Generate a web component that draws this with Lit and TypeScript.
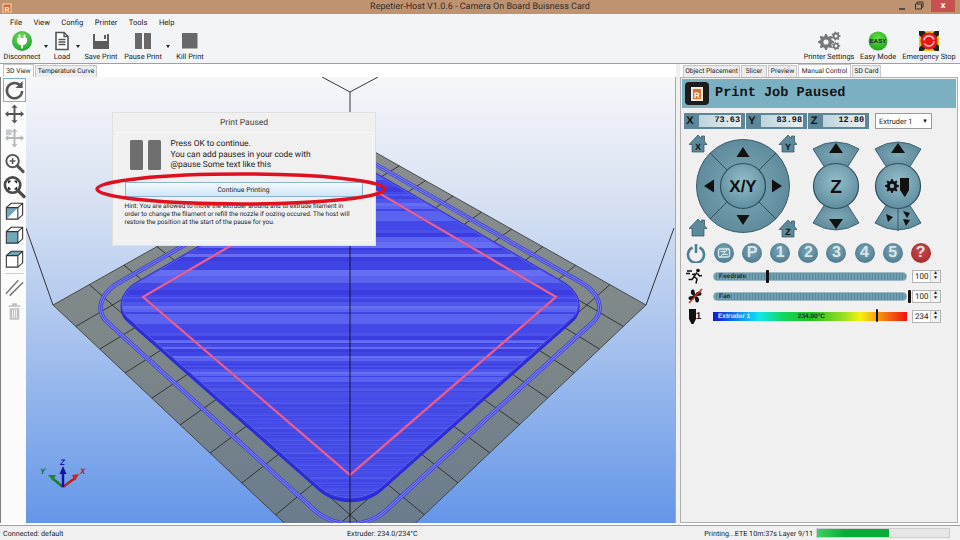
import { LitElement, html, css, svg } from 'lit';
import { customElement } from 'lit/decorators.js';

type Pt = [number, number];

// plate quad, projected: top, right, bottom, left
const Q: Pt[] = [[350, 138], [646, 305], [350, 585], [53, 305]];

function makeH(q: Pt[]) {
  const [[x0, y0], [x1, y1], [x2, y2], [x3, y3]] = q;
  const dx1 = x1 - x2, dx2 = x3 - x2, sx = x0 - x1 + x2 - x3;
  const dy1 = y1 - y2, dy2 = y3 - y2, sy = y0 - y1 + y2 - y3;
  const den = dx1 * dy2 - dx2 * dy1;
  const g = (sx * dy2 - dx2 * sy) / den;
  const h = (dx1 * sy - sx * dy1) / den;
  return { a: x1 - x0 + g * x1, b: x3 - x0 + h * x3, c: x0, d: y1 - y0 + g * y1, e: y3 - y0 + h * y3, f: y0, g, h };
}
const H = makeH(Q);
const fwd = (u: number, v: number): Pt => {
  const w = H.g * u + H.h * v + 1;
  return [(H.a * u + H.b * v + H.c) / w, (H.d * u + H.e * v + H.f) / w];
};
const inv = (x: number, y: number): Pt => {
  const { a, b, c, d, e, f, g, h } = H;
  const w = (d * h - e * g) * x + (b * g - a * h) * y + (a * e - b * d);
  return [((e - f * h) * x + (c * h - b) * y + (b * f - c * e)) / w, ((f * g - d) * x + (a - c * g) * y + (c * d - a * f)) / w];
};

// rounded print outline, given the unrounded left and right corners on screen
function rounded(left: Pt, right: Pt, r: number) {
  const [u0, v1] = inv(left[0], left[1]);
  const [u1, v0] = inv(right[0], right[1]);
  const corners: [number, number, number][] = [
    [u1 - r, v0 + r, -90], [u1 - r, v1 - r, 0], [u0 + r, v1 - r, 90], [u0 + r, v0 + r, 180],
  ];
  const pts: string[] = [];
  for (const [cu, cv, start] of corners) {
    for (let i = 0; i <= 14; i++) {
      const t = ((start + (i * 90) / 14) * Math.PI) / 180;
      const [x, y] = fwd(cu + r * Math.cos(t), cv + r * Math.sin(t));
      pts.push(`${x.toFixed(1)},${y.toFixed(1)}`);
    }
  }
  return 'M' + pts.join('L') + 'Z';
}

const bodyPath = rounded([108, 300], [592, 300], 0.085);
const skirtPath = rounded([85, 302], [615, 302], 0.095);

// horizontal fill stripes of the printed layer
function stripes() {
  const out: { y: number; h: number; c: string }[] = [];
  const upper = ['#4a50ea', '#3f44e4', '#5a62f0', '#4448e6', '#666ef4', '#3b3de0', '#4e55ec'];
  const lower = ['#484ee8', '#4046e4', '#5058ec', '#4449e6'];
  let y = 130, seed = 7;
  while (y < 515) {
    seed = (seed * 31 + 11) % 101;
    const h = y < 340 ? 2 + (seed % 6) : y < 400 ? 1 + (seed % 3) : 1;
    const cols = y < 380 ? upper : lower;
    out.push({ y, h, c: cols[seed % cols.length] });
    y += h;
  }
  return out;
}

function gearPath(cx: number, cy: number, ro: number, ri: number, hole: number, teeth = 8) {
  let d = '';
  const n = teeth * 4;
  for (let i = 0; i < n; i++) {
    const rad = i % 4 < 2 ? ro : ri;
    const t = ((i - 0.5) / n) * Math.PI * 2;
    d += `${i ? 'L' : 'M'}${(cx + rad * Math.cos(t)).toFixed(2)},${(cy + rad * Math.sin(t)).toFixed(2)}`;
  }
  d += `Z M${cx + hole},${cy} a${hole},${hole} 0 1,0 ${-2 * hole},0 a${hole},${hole} 0 1,0 ${2 * hole},0Z`;
  return d;
}

const MENU = ['File', 'View', 'Config', 'Printer', 'Tools', 'Help'];

const ICON = {
  disconnect: svg`<svg width="22" height="22" viewBox="0 0 22 22"><defs><radialGradient id="gr" cx=".45" cy=".35" r=".7"><stop offset="0" stop-color="#7fe05a"/><stop offset="1" stop-color="#12a030"/></radialGradient></defs><circle cx="11" cy="11" r="10" fill="url(#gr)"/><path d="M8.500 4.500v4M13.500 4.500v4M11 14v4.500" stroke="#fff" stroke-width="1.800"/><path d="M6 8h10v2.500a5 5 0 0 1-10 0z" fill="#fff"/></svg>`,
  load: svg`<svg width="18" height="20" viewBox="0 0 18 20"><path d="M3 1.500h8l4 4v13H3z" fill="#fff" stroke="#555" stroke-width="1.600"/><path d="M11 1.500v4h4M5.500 8.500h7M5.500 11h7M5.500 13.500h7" fill="none" stroke="#555" stroke-width="1.300"/></svg>`,
  save: svg`<svg width="20" height="20" viewBox="0 0 20 20"><path d="M2 3h16v15H2z" fill="#5c5c5c"/><path d="M4 3h12v7H4z" fill="#f2f2f2"/><path d="M13 4h2v4h-2z" fill="#5c5c5c"/></svg>`,
  pause: svg`<svg width="20" height="20" viewBox="0 0 20 20"><path d="M2 2h7v16H2zM11 2h7v16h-7z" fill="#686868"/></svg>`,
  kill: svg`<svg width="20" height="20" viewBox="0 0 20 20"><path d="M2 2h15.500v15.500H2z" fill="#686868"/></svg>`,
  settings: svg`<svg width="24" height="20" viewBox="0 0 24 20"><path d="${gearPath(9, 11, 8, 6, 2.6)}" fill="#777" fill-rule="evenodd"/><path d="${gearPath(19, 5, 4.6, 3.4, 1.5, 7)}" fill="#777" fill-rule="evenodd"/><path d="${gearPath(19, 15, 4.2, 3.1, 1.4, 7)}" fill="#777" fill-rule="evenodd"/></svg>`,
  easy: svg`<svg width="20" height="20" viewBox="0 0 20 20"><defs><radialGradient id="ge" cx=".5" cy=".35" r=".7"><stop offset="0" stop-color="#6ce040"/><stop offset="1" stop-color="#16a020"/></radialGradient></defs><circle cx="10" cy="10" r="9.500" fill="url(#ge)"/><text x="10" y="12" text-anchor="middle" font-size="6" font-weight="700" font-family="Liberation Sans" fill="#123">EASY</text></svg>`,
  stop: svg`<svg width="22" height="22" viewBox="0 0 22 22"><rect x="1" y="1" width="20" height="20" fill="#e8c820"/><path d="M1 1h5l15 15v5h-4L1 5zM21 1v4L5 21H1v-3L17 1z" fill="#222"/><circle cx="11" cy="11" r="8.500" fill="#e81818"/><circle cx="11" cy="11" r="5" fill="none" stroke="#f8c8c8" stroke-width="1.500" stroke-dasharray="13 3"/></svg>`,
};

const TOOLS = [
  { label: 'Disconnect', w: 38, icon: ICON.disconnect, arrow: 10 },
  { label: 'Load', w: 22, icon: ICON.load, arrow: 10 },
  { label: 'Save Print', w: 36, icon: ICON.save, arrow: 5 },
  { label: 'Pause Print', w: 38, icon: ICON.pause, arrow: 12 },
  { label: 'Kill Print', w: 32, icon: ICON.kill, arrow: 0 },
];
const TOOLS_R = [
  { label: 'Printer Settings', w: 52, icon: ICON.settings },
  { label: 'Easy Mode', w: 38, icon: ICON.easy },
  { label: 'Emergency Stop', w: 56, icon: ICON.stop },
];

const moveCross = (c: string) => svg`<path d="M12 2l3.200 3.500h-2.200v5.500h5.500v-2.200l3.500 3.200-3.500 3.200v-2.200h-5.500v5.500h2.200l-3.200 3.500-3.200-3.500h2.200v-5.500h-5.500v2.200l-3.500-3.200 3.500-3.200v2.200h5.500v-5.500h-2.200z" fill="${c}"/>`;
const cube = (inner: unknown) => svg`<path d="M3.500 8.500l5-4.500h12v12l-5 4.500h-12z" fill="#fff"/>${inner}<path d="M3.500 8.500h12v12h-12zM3.500 8.500l5-4.500h12v12l-5 4.500M15.500 8.500l5-4.500" fill="none" stroke="#333" stroke-width="1.100"/>`;

const SIDE = [
  svg`<path d="M18.500 8a8 8 0 1 0 1.500 5" fill="none" stroke="#555" stroke-width="2.600"/><path d="M20.500 2.500v7.500h-7.500z" fill="#555"/>`,
  moveCross('#555'),
  svg`${moveCross('#b4b8bc')}<path d="M3 3h6v6H3z" fill="#b4b8bc" opacity=".7"/>`,
  svg`<circle cx="10" cy="10" r="6.500" fill="#fff" stroke="#555" stroke-width="2"/><path d="M7 10h6M10 7v6" stroke="#555" stroke-width="1.600"/><path d="M15 15l6 6" stroke="#555" stroke-width="3.200" stroke-linecap="round"/>`,
  svg`<circle cx="10" cy="10" r="8" fill="#fff" stroke="#4a4a4a" stroke-width="2.800"/><path d="M6 8V6h2M12 6h2v2M14 12v2h-2M8 14H6v-2" fill="none" stroke="#222" stroke-width="1.500"/><path d="M16 16l6 6" stroke="#4a4a4a" stroke-width="3.400" stroke-linecap="round"/>`,
  cube(svg`<path d="M3.500 8.500h12L3.500 20.500z" fill="#6fa8ba"/>`),
  cube(svg`<path d="M3.500 8.500h12v12h-12z" fill="#6fa8ba"/>`),
  cube(svg`<path d="M3.500 8.500l5-4.500h12l-5 4.500z" fill="#6fa8ba"/>`),
  svg`<path d="M3 19L16 5M7 21L21 7" stroke="#777" stroke-width="1.500"/>`,
  svg`<path d="M6 6h12v1.500H6zM9.500 4h5v2h-5zM7 9h10v12H7z" fill="#c0c0c0"/><path d="M10 10.500v9M12 10.500v9M14 10.500v9" stroke="#f4f4f4"/>`,
];

const TABS_L = [{ t: '3D View', on: true, w: 31 }, { t: 'Temperature Curve', on: false, w: 62 }];
const TABS_R = [
  { t: 'Object Placement', on: false, w: 57 }, { t: 'Slicer', on: false, w: 26 }, { t: 'Preview', on: false, w: 29 },
  { t: 'Manual Control', on: true, w: 53 }, { t: 'SD Card', on: false, w: 29 },
];

const grid = () => {
  const out: string[] = [];
  for (let i = 1; i < 10; i++) {
    const t = i / 10;
    const a = fwd(t, 0), b = fwd(t, 1), c = fwd(0, t), d = fwd(1, t);
    out.push(`M${a[0]},${a[1]}L${b[0]},${b[1]}M${c[0]},${c[1]}L${d[0]},${d[1]}`);
  }
  return out.join('');
};

const home = (x: number, y: number, t: string) => svg`
  <g transform="translate(${x} ${y})">
    <path d="M-9 0.500L0 -9L3.500 -5.500V-8H6.500V-2.500L9 0.500H6V8H-6V0.500Z" fill="#5b8a9b" stroke="#2e4f5b" stroke-width=".7"/>
    <text y="6" text-anchor="middle" font-size="9" font-weight="700" font-family="Liberation Sans" fill="#111">${t}</text>
  </g>`;

const bow = (cx: number, split: boolean) => svg`
  <path d="M${cx - 23} 17Q${cx} 3 ${cx + 23} 17L${cx + 11} 36H${cx - 11}Z" fill="url(#pad)" stroke="#3f6575"/>
  <path d="M${cx - 23} 91Q${cx} 105 ${cx + 23} 91L${cx + 11} 72H${cx - 11}Z" fill="url(#pad)" stroke="#3f6575"/>
  <path d="M${cx} 11l7 10h-14z" fill="#111"/>
  ${split
    ? svg`<path d="M${cx} 76V99" stroke="#3f6575" stroke-width="1.200"/><path d="M${cx - 12} 82l7 3-5 5z" fill="#111"/><path d="M${cx + 5} 79l7 2-3 5zM${cx + 5} 87l7 1-4 6z" fill="#111"/>`
    : svg`<path d="M${cx} 97l7-10h-14z" fill="#111"/>`}
  <circle cx="${cx}" cy="54" r="22.500" fill="url(#hub)" stroke="#2e4f5b" stroke-width="1.200"/>`;

const padDefs = svg`<defs>
  <radialGradient id="pad" cx=".5" cy=".5" r=".6"><stop offset="0" stop-color="#7fa9b8"/><stop offset="1" stop-color="#588596"/></radialGradient>
  <radialGradient id="hub" cx=".5" cy=".4" r=".65"><stop offset="0" stop-color="#94bdca"/><stop offset="1" stop-color="#5b8a9c"/></radialGradient>
</defs>`;

const SLIDERS = [
  { label: 'Feedrate', knob: 52, val: '100' },
  { label: 'Fan', knob: 194, val: '100' },
];

@customElement('app-root')
export class AppRoot extends LitElement {
  static styles = css`
    :host { display: block; width: 960px; height: 540px; overflow: hidden; font-family: 'Roboto', 'Liberation Sans', sans-serif; font-size: 7.4px; color: #222; text-rendering: geometricPrecision; }
    .win { width: 960px; height: 540px; display: flex; flex-direction: column; background: #f3f4f5; position: relative; }
    svg { display: block; }

    .title { height: 14px; background: #bf9270; display: grid; grid-template-columns: 1fr auto 1fr; align-items: center; color: #33302c; font-size: 9px; flex: none; }
    .title .r { display: flex; justify-content: flex-end; align-items: flex-start; height: 14px; gap: 7px; padding-right: 5px; }
    .title .l { padding-left: 2px; }
    .close { width: 24px; height: 12px; background: #c75050; color: #fff; text-align: center; font-size: 9px; line-height: 12px; font-weight: 700; }

    .menu { height: 16px; display: flex; gap: 11.5px; padding-left: 10px; align-items: center; flex: none; font-size: 7.6px; }

    .toolbar { height: 33px; flex: none; display: flex; padding: 0 3px; border-bottom: 1px solid #a0a0a0; }
    .tool { display: flex; flex-direction: column; align-items: center; flex: none; white-space: nowrap; }
    .tool .ic { height: 21px; display: flex; align-items: center; justify-content: center; }
    .tool .lb { line-height: 11px; }
    .arrow { flex: none; height: 21px; display: flex; align-items: flex-end; justify-content: center; padding-bottom: 3px; box-sizing: border-box; }
    .arrow i { border: 2.5px solid transparent; border-top: 3px solid #222; border-bottom: 0; }
    .spacer { flex: 1; }
    .tools-r { display: flex; gap: 4px; }

    .main { flex: 1; display: flex; background: #fff; min-height: 0; }
    .left { width: 676px; flex: none; display: flex; flex-direction: column; }
    .split { width: 4px; flex: none; background: #f0f0f0; }
    .right { flex: 1; display: flex; flex-direction: column; }

    .tabs { height: 13px; display: flex; flex: none; align-items: flex-end; gap: 1px; padding-left: 3px; font-size: 6.7px; }
    .tabs span { background: #ececec; border: 1px solid #c8c8c8; border-bottom: 0; line-height: 11px; height: 11px; white-space: nowrap; text-align: center; box-sizing: content-box; }
    .tabs span.on { background: #fff; height: 12px; line-height: 12px; }

    .work { flex: none; height: 446px; display: flex; }
    .side { width: 26px; flex: none; padding: 1px 0 0 2px; box-sizing: border-box; background: #fbfbfb; border-left: 1px solid #808080; }
    .side .b { width: 23px; height: 24.2px; display: flex; align-items: center; justify-content: center; }
    .side .b.hov { outline: 1px solid #7fb2d0; outline-offset: -1px; }
    .side hr { margin: 1px 2px; border: 0; border-top: 1px solid #d0d0d0; }
    .view { width: 649px; height: 446px; flex: none; position: relative; border-right: 1px solid #a8a8a8; box-sizing: content-box; }

    .dlg { position: absolute; left: 86px; top: 35px; width: 264px; height: 134px; background: #f0f0f0; border: 1px solid #e0e0e0; box-sizing: border-box; display: flex; flex-direction: column; align-items: center; }
    .dlg h4 { margin: 0; font-weight: 400; font-size: 8.5px; height: 19px; line-height: 21px; color: #444; }
    .dlg .box { width: 257px; flex: 1; margin-bottom: 4px; border: 1px solid #f8f8f8; box-sizing: border-box; padding: 6px 8px; }
    .dlg .msg { display: flex; gap: 10px; padding-left: 5px; font-size: 8.4px; line-height: 10.5px; height: 38px; white-space: nowrap; }
    .dlg .btn { margin-top: 5px; height: 15px; line-height: 14px; width: 238px; box-sizing: border-box; text-align: center; font-size: 6.8px; border: 1px solid #8cb4d0; background: linear-gradient(#f4f9fd, #cfe6f7); }
    .dlg .hint { margin-top: 5px; font-size: 6.5px; line-height: 8.2px; white-space: nowrap; color: #222; }

    .ring { position: absolute; left: 0; top: 0; pointer-events: none; }

    .panel { height: 446px; flex: none; background: #f0f0f0; border: 1px solid #b0b0b0; box-sizing: border-box; margin-right: 2px; padding: 1px; display: flex; flex-direction: column; }
    .head { height: 29px; flex: none; background: #7bafc2; display: flex; align-items: center; gap: 5px; padding-left: 2px; font: 700 13.6px 'Liberation Mono', monospace; color: #151515; }
    .coords { margin-top: 5px; display: flex; padding-left: 2px; height: 16px; flex: none; }
    .seg { width: 61px; margin-right: 1px; background: #5d8698; display: flex; align-items: center; gap: 3px; padding: 0 4px 0 0; box-sizing: border-box; font: 700 10px 'Liberation Sans', sans-serif; color: #111; }
    .seg b { width: 12px; text-align: center; font-size: 11px; }
    .seg span { flex: 1; height: 12px; line-height: 12px; text-align: right; padding-right: 1px; background: linear-gradient(90deg, #bdd3dc, #e8eff2); font: 700 8.5px 'Liberation Mono', monospace; }
    .sel { margin-left: 5px; width: 57px; background: #fff; border: 1px solid #999; box-sizing: border-box; display: flex; justify-content: space-between; align-items: center; font-size: 7.4px; padding: 0 3px; }
    .sel i { font-style: normal; font-size: 6px; }

    .pads { display: flex; height: 108px; margin-top: 3px; padding-left: 7px; flex: none; }
    .pads .z { margin-left: 11px; }
    .pads .e { margin-left: 6px; }

    .btns { display: flex; gap: 8.1px; padding-left: 4px; margin-top: 3px; height: 20px; flex: none; }
    .cb { width: 20px; height: 20px; border-radius: 50%; background: radial-gradient(circle at 50% 40%, #7ea8b8, #3f6e82); color: #d8e6ea; font: 700 16px/20px 'Liberation Sans', sans-serif; text-align: center; flex: none; }
    .cb.red { background: radial-gradient(circle at 50% 40%, #d04a4a, #9a2424); }
    .cb.plain { background: none; }

    .sliders { margin-top: 3px; }
    .srow { display: grid; grid-template-columns: 26px 194px 29px; column-gap: 5px; height: 20px; align-items: center; }
    .srow .si { display: flex; justify-content: center; align-items: center; font: 700 10px 'Liberation Sans', sans-serif; }
    .track { height: 9px; position: relative; border-radius: 4px; background: repeating-linear-gradient(90deg, #6e9eb0 0 2px, #5a8a9c 2px 3px); color: #1c2e36; font: 700 6.5px/7px 'Liberation Sans', sans-serif; padding-left: 5px; box-sizing: border-box; border: 1px solid #9fbac5; }
    .track.temp { border-radius: 0; border: 0; line-height: 9px; background: linear-gradient(90deg, #1414d0 0, #10a0f8 16%, #10e8e8 24%, #10d860 36%, #20c020 50%, #a0e020 68%, #f8f010 76%, #f89010 86%, #f01010 100%); display: flex; justify-content: space-between; padding: 0 82px 0 5px; }
    .track .w { color: #e8f0ff; }
    .knob { position: absolute; top: -3px; width: 3px; height: 13px; background: #111; border-radius: 1px; }
    .spin { height: 13px; background: #fff; border: 1px solid #b4b4b4; box-sizing: border-box; display: flex; font-size: 8px; line-height: 11px; padding-left: 2px; justify-content: space-between; }
    .spin i { width: 9px; border-left: 1px solid #ccc; background: #f0f0f0; font-style: normal; font-size: 5px; line-height: 5.5px; text-align: center; }

    .status { height: 15px; flex: none; border-top: 1px solid #a0a0a0; box-sizing: border-box; display: flex; align-items: center; padding: 0 10px 0 3px; background: #f0f0f0; font-size: 7.2px; }
    .status .a { width: 344px; flex: none; }
    .status .c { flex: 1; }
    .status .p { margin-right: 3px; }
    .prog { width: 134px; height: 10px; background: #e6e6e6; border: 1px solid #cfcfcf; box-sizing: border-box; }
    .prog i { display: block; width: 54.5%; height: 100%; background: linear-gradient(90deg, #3fce60, #06ad36 40%, #06ad36); }
  `;

  private scene() {
    return html`<svg width="649" height="446" viewBox="26 77 649 446">
      <defs>
        <linearGradient id="sky" x1="0" y1="0" x2="0" y2="1">
          <stop offset="0" stop-color="#f7f7f9"/><stop offset=".3" stop-color="#d4dff2"/>
          <stop offset=".58" stop-color="#a9c3ee"/><stop offset="1" stop-color="#6496e8"/>
        </linearGradient>
        <linearGradient id="plate" x1="0" y1="0" x2="0" y2="1">
          <stop offset="0" stop-color="#8b8f8e"/><stop offset=".5" stop-color="#7c8688"/><stop offset="1" stop-color="#64788f"/>
        </linearGradient>
        <clipPath id="bodyclip"><path d="${bodyPath}"/></clipPath>
      </defs>
      <rect x="26" y="77" width="649" height="446" fill="url(#sky)"/>
      <path d="M322 77L350 92L378 77M350 92V138M26 228L53 305M674 228L646 305" fill="none" stroke="#222" stroke-width=".9"/>
      <path d="M${Q.map((p) => p.join(',')).join('L')}Z" fill="url(#plate)" stroke="#333" stroke-width=".8"/>
      <path d="${grid()}" stroke="#222" stroke-width=".8" fill="none"/>
      <path d="${skirtPath}" fill="none" stroke="#3a3cd8" stroke-width="4.500"/>
      <path d="${skirtPath}" fill="none" stroke="#7a7eea" stroke-width="3"/>
      <path d="${skirtPath}" fill="none" stroke="#3f42dc" stroke-width="1"/>
      <path d="${bodyPath}" transform="translate(0 3)" fill="#2a2cd4" stroke="#2a2cd4" stroke-width="3"/>
      <path d="${bodyPath}" fill="#3a3cdc" stroke="#3434da" stroke-width="3"/>
      <g clip-path="url(#bodyclip)">
        ${stripes().map((s) => svg`<rect x="90" y="${s.y}" width="520" height="${s.h}" fill="${s.c}"/>`)}
      </g>
      <path d="${bodyPath}" fill="none" stroke="#5a5eea" stroke-width="1"/>
      <path d="M350 176L556 297L350 475L143 297Z" fill="none" stroke="#d4528f" stroke-width="2.500"/>
      <path d="M350 176L556 297L350 475L143 297Z" fill="none" stroke="#ee7fb0" stroke-width=".7"/>
      <path d="M350 138V523" stroke="#111" stroke-width=".9"/>
      <g stroke-width="2.400" fill="none">
        <path d="M63 487L52 478" stroke="#1d7a2a"/><path d="M63 487L75 478" stroke="#b8241e"/><path d="M63 487V473" stroke="#1414a0"/>
      </g>
      <path d="M48 475l8 0-3 6z" fill="#1d8a2a"/><path d="M79 474l-7 1 3 6z" fill="#c8281e"/><path d="M63 466l-3.500 8h7z" fill="#14149c"/>
      <g font-family="Liberation Sans" font-weight="700" font-size="8" font-style="italic">
        <text x="40" y="474" fill="#1d6a2a">Y</text><text x="80" y="474" fill="#a8201c">X</text><text x="60" y="465" fill="#14149c">Z</text>
      </g>
    </svg>`;
  }

  private renderTabs(list: { t: string; on: boolean; w: number }[]) {
    return html`<div class="tabs">${list.map((t) => html`<span class="${t.on ? 'on' : ''}" style="width:${t.w - 2}px">${t.t}</span>`)}</div>`;
  }

  render() {
    return html`<div class="win">
      <div class="title">
        <div class="l"><svg width="11" height="11" viewBox="0 0 11 11"><rect x="1" y="2" width="8" height="9" fill="#d8682a" stroke="#f4dcc0"/><text x="5" y="9.500" text-anchor="middle" font-size="7" font-weight="700" font-family="Liberation Sans" fill="#fff">R</text></svg></div>
        <div>Repetier-Host V1.0.6 - Camera On Board Buisness Card</div>
        <div class="r">
          <svg width="10" height="12" viewBox="0 0 10 12"><path d="M2 9h6" stroke="#333" stroke-width="1.500"/></svg>
          <svg width="10" height="12" viewBox="0 0 10 12"><path d="M1.500 4h6v5h-6zM3 4V2h6v5H7.500" fill="none" stroke="#333"/></svg>
          <div class="close">x</div>
        </div>
      </div>
      <div class="menu">${MENU.map((m) => html`<span>${m}</span>`)}</div>
      <div class="toolbar">
        ${TOOLS.map((t) => html`
          <div class="tool" style="width:${t.w}px"><div class="ic">${t.icon}</div><div class="lb">${t.label}</div></div>
          ${t.arrow ? html`<div class="arrow" style="width:${t.arrow}px">${t.arrow > 5 ? html`<i></i>` : ''}</div>` : ''}
        `)}
        <div class="spacer"></div>
        <div class="tools-r">
          ${TOOLS_R.map((t) => html`<div class="tool" style="width:${t.w}px"><div class="ic">${t.icon}</div><div class="lb">${t.label}</div></div>`)}
        </div>
      </div>
      <div class="main">
        <div class="left">
          ${this.renderTabs(TABS_L)}
          <div class="work">
            <div class="side">
              ${SIDE.map((s, i) => html`
                ${i === 8 ? html`<hr />` : ''}
                <div class="b ${i === 0 ? 'hov' : ''}"><svg width="24" height="24" viewBox="0 0 24 24">${s}</svg></div>
              `)}
            </div>
            <div class="view">
              ${this.scene()}
              <div class="dlg">
                <h4>Print Paused</h4>
                <div class="box">
                  <div class="msg">
                    <svg width="31" height="32" viewBox="0 0 31 32"><rect x="0" y="1" width="13" height="30" rx="1.500" fill="#6e6e6e"/><rect x="18" y="1" width="13" height="30" rx="1.500" fill="#6e6e6e"/></svg>
                    <div>Press OK to continue.<br />You can add pauses in your code with<br />@pause Some text like this</div>
                  </div>
                  <div class="btn">Continue Printing</div>
                  <div class="hint">Hint: You are allowed to move the extruder around and to extrude filament in<br />order to change the filament or refill the nozzle if oozing occured. The host will<br />restore the position at the start of the pause for you.</div>
                </div>
              </div>
              <svg class="ring" width="649" height="446" viewBox="26 77 649 446"><ellipse cx="241" cy="189" rx="144" ry="15" fill="none" stroke="#e01020" stroke-width="3.500"/></svg>
            </div>
          </div>
        </div>
        <div class="split"></div>
        <div class="right">
          ${this.renderTabs(TABS_R)}
          <div class="panel">
            <div class="head">
              <svg width="26" height="25" viewBox="0 0 26 25"><rect x="1" y="1" width="24" height="23" rx="4" fill="#1c1c1c"/><rect x="7" y="6" width="12" height="14" fill="#f3ead8"/><rect x="9" y="8" width="8" height="10" fill="#d87030"/><text x="13" y="16.500" text-anchor="middle" font-size="8" font-weight="700" font-family="Liberation Sans" fill="#fff">R</text></svg>
              <span>Print Job Paused</span>
            </div>
            <div class="coords">
              <div class="seg"><b>X</b><span>73.63</span></div>
              <div class="seg"><b>Y</b><span>83.98</span></div>
              <div class="seg"><b>Z</b><span>12.80</span></div>
              <div class="sel">Extruder 1<i>▼</i></div>
            </div>
            <div class="pads">
              <svg width="108" height="108" viewBox="0 0 108 108">
                ${padDefs}
                <circle cx="54" cy="54" r="46.500" fill="url(#pad)" stroke="#3a5e6e"/>
                <path d="M21 21L87 87M87 21L21 87" stroke="#2e4f5b" stroke-width="1"/>
                <circle cx="54" cy="54" r="22.500" fill="url(#hub)" stroke="#2e4f5b" stroke-width="1.200"/>
                <path d="M54 15l6.500 10h-13zM54 93l6.500-10h-13zM15 54l10-6.500v13zM93 54l-10-6.500v13z" fill="#111"/>
                <text x="54" y="60" text-anchor="middle" font-size="17" font-weight="700" font-family="Liberation Sans" fill="#111">X/Y</text>
                ${home(9, 12, 'X')}${home(99, 12, 'Y')}${home(9, 96, '')}${home(99, 97, 'Z')}
              </svg>
              <svg class="z" width="56" height="108" viewBox="0 0 56 108">
                ${bow(28, false)}
                <text x="28" y="61" text-anchor="middle" font-size="19" font-weight="700" font-family="Liberation Sans" fill="#111">Z</text>
              </svg>
              <svg class="e" width="56" height="108" viewBox="0 0 56 108">
                ${bow(28, true)}
                <path d="${gearPath(22, 54, 7, 5, 2.200)}" fill="#111" fill-rule="evenodd"/>
                <path d="M30 46h9v12l-4 7-1-1-4-6z" fill="#111"/>
              </svg>
            </div>
            <div class="btns">
              <div class="cb plain"><svg width="20" height="20" viewBox="0 0 20 20"><path d="M6.500 4.500a8 8 0 1 0 7 0" fill="none" stroke="#4f7f92" stroke-width="2.600"/><path d="M10 1v9" stroke="#4f7f92" stroke-width="2.600"/></svg></div>
              <div class="cb"><svg width="20" height="20" viewBox="0 0 20 20"><rect x="4.500" y="6" width="11" height="8" rx="1.500" fill="none" stroke="#d8e6ea" stroke-width="1.300"/><path d="M5 15L15 5M6.500 8.500h5M8 11.500h6" stroke="#d8e6ea"/></svg></div>
              <div class="cb">P</div><div class="cb">1</div><div class="cb">2</div><div class="cb">3</div><div class="cb">4</div><div class="cb">5</div>
              <div class="cb red">?</div>
            </div>
            <div class="sliders">
              ${SLIDERS.map((s, i) => html`
                <div class="srow">
                  <div class="si"><svg width="18" height="16" viewBox="0 0 18 16">
                    ${i === 0
                      ? svg`<circle cx="12" cy="2.500" r="1.800"/><path d="M11 4.500l-3 4 3 2.500-1 4.500M9 6l-3 .5M11.500 5.500l2 2.500 2.500-.5M8 9l-2 2.500H2.500M1 3h5M0 5.500h4" fill="none" stroke="#111" stroke-width="1.500"/>`
                      : svg`<path d="M9 8C4 8 4 2 6.500 1.500 9 1 9 5 9 8zM9 8c5 0 5 6 2.500 6.500C9 15 9 11 9 8zM9 8C9 3 15 3 15.500 5.500 16 8 12 8 9 8zM9 8c0 5-6 5-6.500 2.500C2 8 6 8 9 8z" fill="#111"/><path d="M3 15L16 1" stroke="#d03030" stroke-width="1.500"/>`}
                  </svg></div>
                  <div class="track">${s.label}<div class="knob" style="left:${s.knob}px"></div></div>
                  <div class="spin">${s.val}<i>▲<br />▼</i></div>
                </div>`)}
              <div class="srow">
                <div class="si"><svg width="7" height="15" viewBox="0 0 7 15"><path d="M0 0h7v10l-2.500 5h-2L0 10z" fill="#111"/></svg>1</div>
                <div class="track temp"><span class="w">Extruder 1</span><span>234.00°C</span><div class="knob" style="left:163px;width:2px"></div></div>
                <div class="spin">234<i>▲<br />▼</i></div>
              </div>
            </div>
          </div>
        </div>
      </div>
      <div class="status">
        <span class="a">Connected: default</span>
        <span class="c">Extruder: 234.0/234°C</span>
        <span class="p">Printing...ETE 10m:37s Layer 9/11</span>
        <div class="prog"><i></i></div>
      </div>
    </div>`;
  }
}
